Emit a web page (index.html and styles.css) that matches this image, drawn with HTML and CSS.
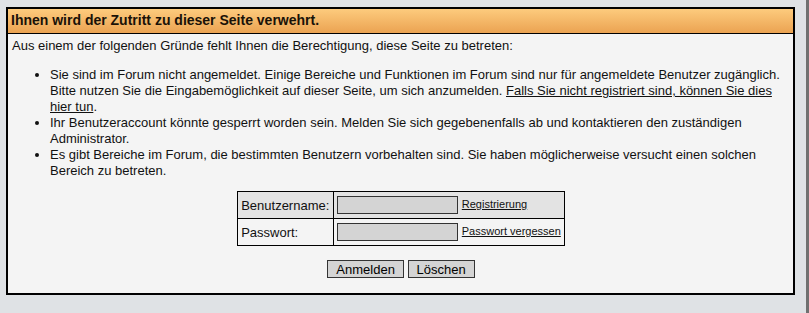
FILE: index.html
```html
<!DOCTYPE html>
<html lang="de">
<head>
    <meta charset="UTF-8" />
    <title>Zutritt verwehrt</title>
    <link rel="stylesheet" href="styles.css">
</head>
<body>
    <div class="panel">
        <div class="panel-head">Ihnen wird der Zutritt zu dieser Seite verwehrt.</div>
        <div class="panel-body">
            <p class="intro">Aus einem der folgenden Gründe fehlt Ihnen die Berechtigung, diese Seite zu betreten:</p>
            <ul class="reasons">
                <li>Sie sind im Forum nicht angemeldet. Einige Bereiche und Funktionen im Forum sind nur für angemeldete Benutzer zugänglich. Bitte nutzen Sie die Eingabemöglichkeit auf dieser Seite, um sich anzumelden. <a href="#">Falls Sie nicht registriert sind, können Sie dies hier tun</a>.</li>
                <li>Ihr Benutzeraccount könnte gesperrt worden sein. Melden Sie sich gegebenenfalls ab und kontaktieren den zuständigen Administrator.</li>
                <li>Es gibt Bereiche im Forum, die bestimmten Benutzern vorbehalten sind. Sie haben möglicherweise versucht einen solchen Bereich zu betreten.</li>
            </ul>

            <form class="login" onsubmit="return false;">
                <table class="login-table">
                    <tr class="row-dark">
                        <td class="label">Benutzername:</td>
                        <td class="field"><input type="text" /> <a href="#" class="small-link">Registrierung</a></td>
                    </tr>
                    <tr>
                        <td class="label">Passwort:</td>
                        <td class="field"><input type="password" /> <a href="#" class="small-link">Passwort vergessen</a></td>
                    </tr>
                </table>
                <div class="buttons">
                    <button type="submit">Anmelden</button>
                    <button type="reset">Löschen</button>
                </div>
            </form>
        </div>
    </div>
</body>
</html>
```

FILE: styles.css
```css
* {
    margin: 0;
    padding: 0;
    box-sizing: border-box;
}
body {
    background-color: #dfe2e5;
    font-family: "Liberation Sans", Arial, sans-serif;
    font-size: 13px;
    color: #111;
    padding: 7px 0 0 6px;
    height: 313px;
    overflow: hidden;
    border-right: 3px solid #707070;
}
.panel {
    width: 789px;
    height: 288px;
    border: 2px solid #000;
    background-color: #f4f4f4;
}
.panel-head {
    height: 25px;
    line-height: 23px;
    padding-left: 3px;
    font-size: 14px;
    font-weight: bold;
    color: #1a1208;
    background: linear-gradient(#fdcb7d, #eba352);
    border-bottom: 1px solid #000;
}
.panel-body {
    padding: 4px 3px 0 4px;
}
.intro {
    line-height: 16px;
}
.reasons {
    margin: 13px 0 0 38px;
    line-height: 16px;
    list-style: disc;
}
.reasons a {
    color: #111;
}
.login {
    margin-top: 12px;
}
.login-table {
    margin: 0 auto;
    border-collapse: collapse;
    border: 1px solid #000;
}
.login-table td {
    border: 1px solid #000;
    height: 27px;
    padding: 0 3px;
}
.row-dark td {
    background-color: #e3e3e3;
}
.label {
    width: 96px;
}
.field input {
    width: 121px;
    height: 18px;
    background-color: #d4d4d4;
    border: 1px solid #333;
    vertical-align: middle;
}
.small-link {
    font-size: 11px;
    color: #111;
}
.buttons {
    text-align: center;
    margin-top: 14px;
}
.buttons button {
    font-family: "Liberation Sans", Arial, sans-serif;
    font-size: 13px;
    background-color: #d4d4d4;
    border: 1px solid #333;
    height: 18px;
    padding: 0 8px;
}
```
